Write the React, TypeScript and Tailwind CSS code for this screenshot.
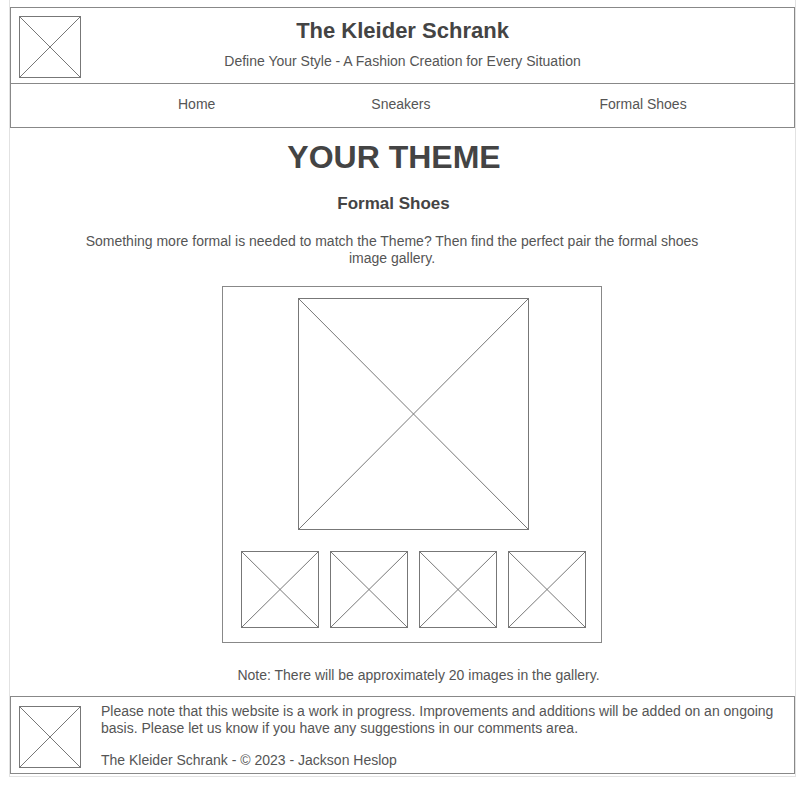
import React from 'react'

const Placeholder = ({ w, h }: { w: number; h: number }) => {
  return (
    <svg width={w} height={h} viewBox={`0 0 ${w} ${h}`} className="block shrink-0">
      <rect x="0.5" y="0.5" width={w - 1} height={h - 1} fill="#fff" stroke="#777" />
      <line x1="0.5" y1="0.5" x2={w - 0.5} y2={h - 0.5} stroke="#777" />
      <line x1={w - 0.5} y1="0.5" x2="0.5" y2={h - 0.5} stroke="#777" />
    </svg>
  )
}

const App = () => {
  return (
    <div className="bg-white min-h-[792px] font-['Liberation_Sans',Arial,sans-serif] text-[#444]">
      <div className="ml-[9px] w-[787px] pt-[7px] border-x border-b border-[#e2e2e2]">
        {/* header */}
        <header className="flex h-[77px] border border-[#888] pl-[8px] pt-[8px]">
          <Placeholder w={62} h={62} />
          <div className="flex-1 flex flex-col items-center pr-[70px]">
            <h1 className="text-[22px] leading-[26px] font-bold mt-[2px]">The Kleider Schrank</h1>
            <p className="text-[14px] leading-[17px] mt-[9px] text-[#555]">Define Your Style - A Fashion Creation for Every Situation</p>
          </div>
        </header>
        <nav className="flex items-center h-[44px] border-x border-b border-[#888] pl-[167px] pb-[2px] text-[14px] text-[#555]">
          <a>Home</a>
          <a className="ml-[156px]">Sneakers</a>
          <a className="ml-[169px]">Formal Shoes</a>
        </nav>

        {/* main */}
        <main className="flex flex-col">
          <h2 className="text-center text-[32px] leading-[37px] font-bold mt-[11px] pr-[17px]">YOUR THEME</h2>
          <h3 className="text-center text-[17px] leading-[20px] font-bold mt-[18px] pr-[18px]">Formal Shoes</h3>
          <p className="ml-[62px] w-[640px] text-center text-[14px] leading-[17px] mt-[19px] text-[#555]">
            Something more formal is needed to match the Theme? Then find the perfect pair the formal shoes image gallery.
          </p>
          <div className="ml-[212px] w-[380px] h-[357px] mt-[19px] border border-[#888] flex flex-col">
            <div className="ml-[75px] mt-[11px]">
              <Placeholder w={231} h={232} />
            </div>
            <div className="flex gap-[11px] ml-[18px] mt-[21px]">
              <Placeholder w={78} h={77} />
              <Placeholder w={78} h={77} />
              <Placeholder w={78} h={77} />
              <Placeholder w={78} h={77} />
            </div>
          </div>
          <p className="text-center text-[14px] leading-[17px] mt-[24px] pl-[32px] text-[#555]">
            Note: There will be approximately 20 images in the gallery.
          </p>
        </main>

        {/* footer */}
        <footer className="flex h-[78px] mt-[12px] border border-[#888] pl-[8px] pt-[9px] text-[14px] leading-[17px] text-[#555]">
          <Placeholder w={62} h={62} />
          <div className="ml-[20px] pr-[12px] -mt-[3px]">
            <p>
              Please note that this website is a work in progress. Improvements and additions will be added on an ongoing basis. Please let us know if you have any suggestions in our comments area.
            </p>
            <p className="mt-[15px]">The Kleider Schrank - © 2023 - Jackson Heslop</p>
          </div>
        </footer>
        <div className="h-[2px]" />
      </div>
    </div>
  )
}

export default App
